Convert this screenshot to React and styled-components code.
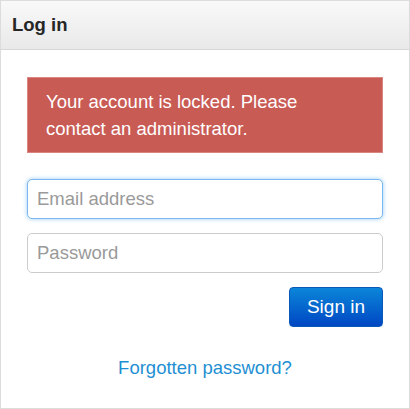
import React from 'react'
import styled, { createGlobalStyle } from 'styled-components'

const GlobalStyle = createGlobalStyle`
  html, body {
    margin: 0;
    padding: 0;
    background: #ffffff;
  }
  body {
    font-family: "Liberation Sans", Arial, Helvetica, sans-serif;
  }
  * {
    box-sizing: border-box;
  }
`

const Panel = styled.div`
  width: 410px;
  height: 409px;
  border: 1px solid #dcdcdc;
  background: #ffffff;
  display: flex;
  flex-direction: column;
`

const Header = styled.div`
  height: 49px;
  padding: 0 11px;
  display: flex;
  align-items: center;
  background: linear-gradient(to bottom, #f9f9f9, #e9e9e9);
  border-bottom: 1px solid #d6d6d6;
`

const Title = styled.h1`
  margin: 0;
  font-size: 18.5px;
  font-weight: bold;
  color: #262626;
`

const Body = styled.div`
  padding: 27px 26px 0;
  display: flex;
  flex-direction: column;
`

const Alert = styled.div`
  height: 76px;
  padding: 10px 35px 10px 18px;
  background: #c95b55;
  border: 1px solid #d98681;
  color: #ffffff;
  font-size: 18.5px;
  line-height: 27px;
`

const Form = styled.form`
  margin-top: 26px;
  display: flex;
  flex-direction: column;
  gap: 14px;
`

const Input = styled.input`
  height: 40px;
  width: 100%;
  padding: 0 9px;
  font-family: "Liberation Sans", Arial, sans-serif;
  font-size: 18.5px;
  color: #333;
  background: #fff;
  border-radius: 5px;
  border: 1px solid ${p => (p.$focused ? '#7ab8ef' : '#cccccc')};
  box-shadow: ${p => (p.$focused ? '0 0 4px rgba(82, 168, 236, 0.6)' : 'none')};
  outline: none;
  &::placeholder {
    color: #9a9a9a;
  }
`

const Actions = styled.div`
  display: flex;
  justify-content: flex-end;
`

const Button = styled.button`
  width: 94px;
  height: 40px;
  border-radius: 4px;
  border: 1px solid #0a58b8;
  background: linear-gradient(to bottom, #0b86d9, #0047c3);
  color: #ffffff;
  font-family: "Liberation Sans", Arial, sans-serif;
  font-size: 19px;
  cursor: pointer;
`

const Forgot = styled.a`
  margin-top: 30px;
  text-align: center;
  font-size: 18.5px;
  color: #1e8fd3;
  text-decoration: none;
`

export default function App() {
  return (
    <>
      <GlobalStyle />
      <Panel>
        <Header>
          <Title>Log in</Title>
        </Header>
        <Body>
          <Alert>Your account is locked. Please contact an administrator.</Alert>
          <Form onSubmit={e => e.preventDefault()}>
            <Input $focused type="email" placeholder="Email address" />
            <Input type="password" placeholder="Password" />
            <Actions>
              <Button type="submit">Sign in</Button>
            </Actions>
          </Form>
          <Forgot href="#">Forgotten password?</Forgot>
        </Body>
      </Panel>
    </>
  )
}
